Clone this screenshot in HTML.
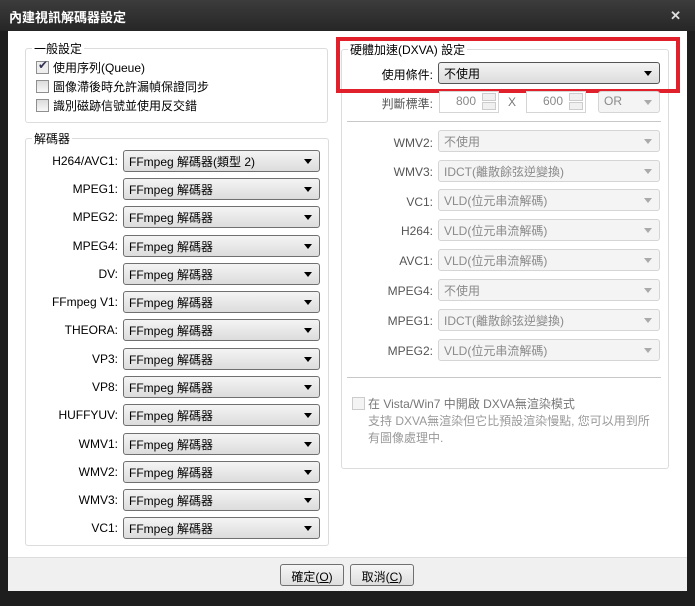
<!DOCTYPE html><html><head><meta charset="utf-8"><style>
*{box-sizing:border-box}
body{margin:0;width:695px;height:606px;background:#1e1e1e;font-family:"Liberation Sans","Noto Sans CJK TC",sans-serif;font-size:12px;color:#000;position:relative;overflow:hidden}
.title{position:absolute;left:0;top:0;width:695px;height:31px;background:linear-gradient(#3c3c3c,#262626);color:#fff;font-weight:bold;font-size:13px;padding:7px 0 0 9px}
.x{position:absolute;right:14px;top:8px;color:#ddd;font-size:13px;font-weight:bold}
.client{position:absolute;left:8px;top:31px;width:679px;height:560px;background:#fff}
.foot{position:absolute;left:8px;top:557px;width:679px;height:34px;background:#f0f0f0;border-top:1px solid #ddd}
.grp{position:absolute;border:1px solid #dcdcdc;border-radius:3px}
.gl{position:absolute;background:#fff;padding:0 2px;top:-9px;left:6px}
.a{position:absolute}
.cb{position:absolute;width:13px;height:13px;border:1px solid #8f8f8f;background:linear-gradient(#dcdcdc,#f8f8f8)}
.dd{position:absolute;height:22px;border:1px solid #707070;border-radius:3px;background:linear-gradient(#f4f4f4,#dcdcdc);padding:2px 0 0 5px;white-space:nowrap}
.dd:after{content:"";position:absolute;right:7px;top:8px;border:4px solid transparent;border-top:5px solid #000;border-bottom:0}
.dis{border-color:#d5d5d5;background:#f4f4f4;color:#8a8a8a}
.dis:after{border-top-color:#aaa}
.sp{position:absolute;height:22px;border:1px solid #d5d5d5;background:#fff;color:#8a8a8a;text-align:right;padding:2px 22px 0 0}
.sp i{position:absolute;right:2px;width:14px;height:8px;border:1px solid #ccc;background:#f0f0f0}
.lb{position:absolute;text-align:right;width:110px;top:0}
.rl{position:absolute;text-align:right;width:95px;color:#555}
.btn{position:absolute;top:564px;height:22px;border:1px solid #707070;border-radius:3px;background:linear-gradient(#f6f6f6,#dedede);text-align:center;padding-top:3px}
</style></head><body>
<div class="title">內建視訊解碼器設定</div><div class="x">✕</div>
<div class="client"></div>
<div class="foot"></div>
<div class="grp" style="left:25px;top:48px;width:303px;height:75px"><span class="gl">一般設定</span></div>
<div class="cb" style="left:36px;top:61px;background:#eee"></div><div class="a" style="left:38px;top:58px;font-size:12px;color:#335">✔</div>
<div class="a" style="left:53px;top:59px">使用序列(Queue)</div>
<div class="cb" style="left:36px;top:80px"></div><div class="a" style="left:53px;top:78px">圖像滯後時允許漏幀保證同步</div>
<div class="cb" style="left:36px;top:99px"></div><div class="a" style="left:53px;top:97px">識別磁跡信號並使用反交錯</div>
<div class="grp" style="left:25px;top:138px;width:304px;height:408px"><span class="gl">解碼器</span></div>
<div class="lb" style="left:8px;top:154px">H264/AVC1:</div><div class="dd" style="left:123px;top:150px;width:197px">FFmpeg 解碼器(類型 2)</div>
<div class="lb" style="left:8px;top:182px">MPEG1:</div><div class="dd" style="left:123px;top:178px;width:197px">FFmpeg 解碼器</div>
<div class="lb" style="left:8px;top:210px">MPEG2:</div><div class="dd" style="left:123px;top:206px;width:197px">FFmpeg 解碼器</div>
<div class="lb" style="left:8px;top:239px">MPEG4:</div><div class="dd" style="left:123px;top:235px;width:197px">FFmpeg 解碼器</div>
<div class="lb" style="left:8px;top:267px">DV:</div><div class="dd" style="left:123px;top:263px;width:197px">FFmpeg 解碼器</div>
<div class="lb" style="left:8px;top:295px">FFmpeg V1:</div><div class="dd" style="left:123px;top:291px;width:197px">FFmpeg 解碼器</div>
<div class="lb" style="left:8px;top:323px">THEORA:</div><div class="dd" style="left:123px;top:319px;width:197px">FFmpeg 解碼器</div>
<div class="lb" style="left:8px;top:352px">VP3:</div><div class="dd" style="left:123px;top:348px;width:197px">FFmpeg 解碼器</div>
<div class="lb" style="left:8px;top:380px">VP8:</div><div class="dd" style="left:123px;top:376px;width:197px">FFmpeg 解碼器</div>
<div class="lb" style="left:8px;top:408px">HUFFYUV:</div><div class="dd" style="left:123px;top:404px;width:197px">FFmpeg 解碼器</div>
<div class="lb" style="left:8px;top:437px">WMV1:</div><div class="dd" style="left:123px;top:433px;width:197px">FFmpeg 解碼器</div>
<div class="lb" style="left:8px;top:465px">WMV2:</div><div class="dd" style="left:123px;top:461px;width:197px">FFmpeg 解碼器</div>
<div class="lb" style="left:8px;top:493px">WMV3:</div><div class="dd" style="left:123px;top:489px;width:197px">FFmpeg 解碼器</div>
<div class="lb" style="left:8px;top:521px">VC1:</div><div class="dd" style="left:123px;top:517px;width:197px">FFmpeg 解碼器</div>

<div class="grp" style="left:341px;top:49px;width:328px;height:420px"><span class="gl">硬體加速(DXVA) 設定</span></div>
<div class="a" style="left:336px;top:37px;width:344px;height:56px;border:4px solid #e0202a"></div>
<div class="a" style="left:338px;top:66px;width:95px;text-align:right">使用條件:</div>
<div class="dd" style="left:438px;top:62px;width:222px;border-color:#555">不使用</div>
<div class="rl" style="left:338px;top:95px">判斷標準:</div>
<div class="sp" style="left:439px;top:91px;width:60px">800<i style="top:1px"></i><i style="top:10px"></i></div>
<div class="a" style="left:508px;top:95px;color:#777">X</div>
<div class="sp" style="left:526px;top:91px;width:60px">600<i style="top:1px"></i><i style="top:10px"></i></div>
<div class="dd dis" style="left:598px;top:91px;width:62px">OR</div>
<div class="a" style="left:347px;top:121px;width:314px;border-top:1px solid #c8c8c8"></div>
<div class="rl" style="left:338px;top:136px">WMV2:</div><div class="dd dis" style="left:438px;top:130px;width:222px">不使用</div>
<div class="rl" style="left:338px;top:165px">WMV3:</div><div class="dd dis" style="left:438px;top:160px;width:222px">IDCT(離散餘弦逆變換)</div>
<div class="rl" style="left:338px;top:195px">VC1:</div><div class="dd dis" style="left:438px;top:189px;width:222px">VLD(位元串流解碼)</div>
<div class="rl" style="left:338px;top:224px">H264:</div><div class="dd dis" style="left:438px;top:219px;width:222px">VLD(位元串流解碼)</div>
<div class="rl" style="left:338px;top:254px">AVC1:</div><div class="dd dis" style="left:438px;top:249px;width:222px">VLD(位元串流解碼)</div>
<div class="rl" style="left:338px;top:284px">MPEG4:</div><div class="dd dis" style="left:438px;top:279px;width:222px">不使用</div>
<div class="rl" style="left:338px;top:314px">MPEG1:</div><div class="dd dis" style="left:438px;top:309px;width:222px">IDCT(離散餘弦逆變換)</div>
<div class="rl" style="left:338px;top:344px">MPEG2:</div><div class="dd dis" style="left:438px;top:339px;width:222px">VLD(位元串流解碼)</div>
<div class="a" style="left:347px;top:377px;width:314px;border-top:1px solid #c8c8c8"></div>
<div class="cb" style="left:352px;top:397px;border-color:#ccc;background:#f4f4f4"></div>
<div class="a" style="left:368px;top:395px;color:#777">在 Vista/Win7 中開啟 DXVA無渲染模式</div>
<div class="a" style="left:368px;top:413px;color:#999;width:285px;line-height:17px">支持 DXVA無渲染但它比預設渲染慢點, 您可以用到所有圖像處理中.</div>
<div class="btn" style="left:280px;width:64px">確定(<u>O</u>)</div>
<div class="btn" style="left:350px;width:64px">取消(<u>C</u>)</div>
</body></html>
